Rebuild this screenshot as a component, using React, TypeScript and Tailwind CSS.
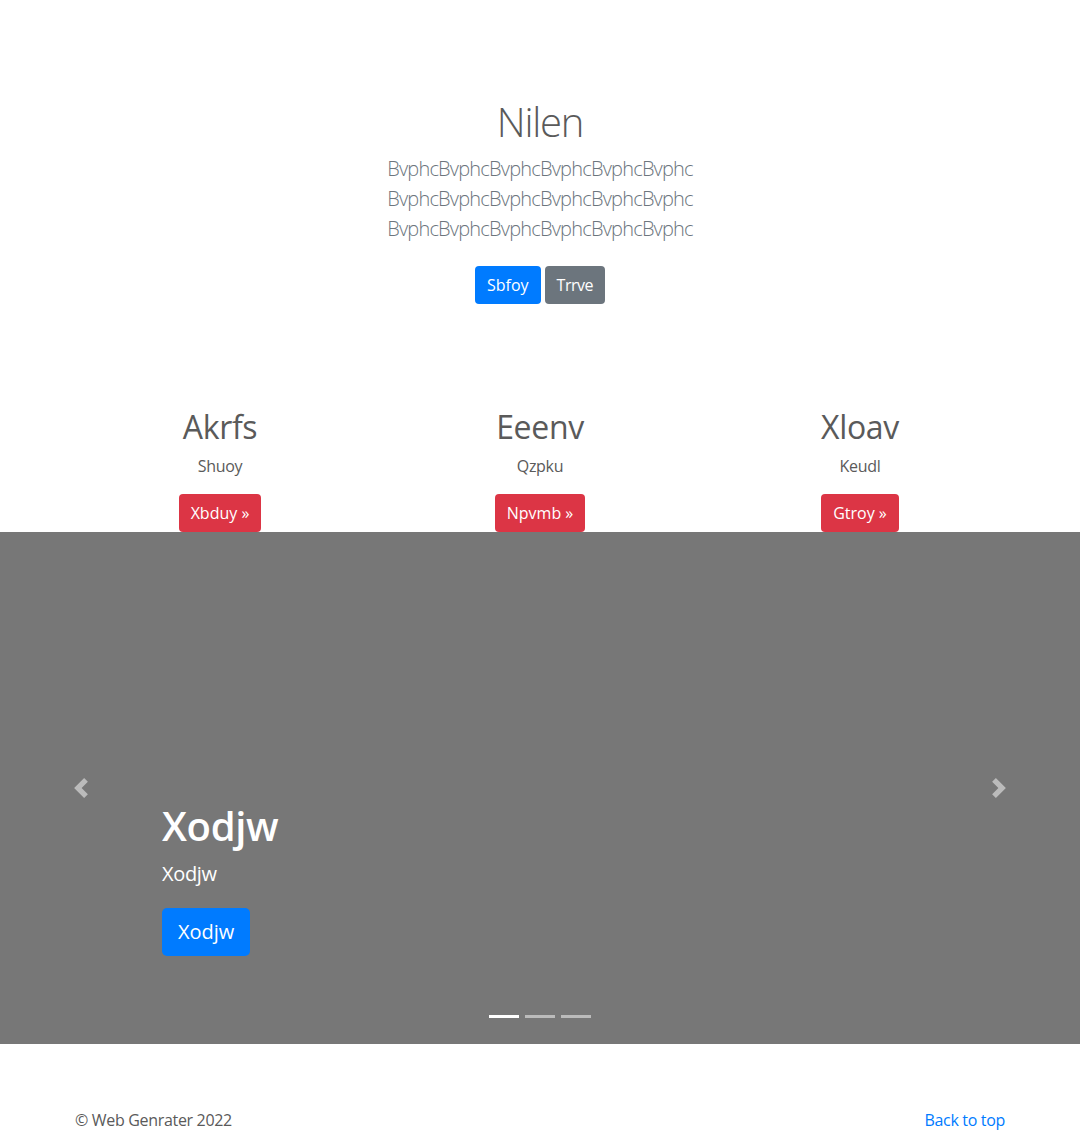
import React from "react";

const font = { fontFamily: '"Open Sans", "Noto Sans", sans-serif' };

function Chevron({ dir }: { dir: "left" | "right" }) {
  return (
    <svg width="20" height="20" viewBox="0 0 8 8" fill="#fff">
      {dir === "left" ? (
        <path d="M5.25 0l-4 4 4 4 1.5-1.5L4.25 4l2.5-2.5L5.25 0z" />
      ) : (
        <path d="M2.75 0l-1.5 1.5L3.75 4l-2.5 2.5L2.75 8l4-4-4-4z" />
      )}
    </svg>
  );
}

export default function App() {
  const cols = [
    { h: "Akrfs", p: "Shuoy", b: "Xbduy" },
    { h: "Eeenv", p: "Qzpku", b: "Npvmb" },
    { h: "Xloav", p: "Keudl", b: "Gtroy" },
  ];
  return (
    <div className="bg-white text-[#5a5a5a] min-h-[1132px] tracking-[-0.02em]" style={font}>
      <section className="text-center pt-[98px]">
        <h1 className="text-[40px] font-light leading-[1.2] mb-2 tracking-[-0.03em]">Nilen</h1>
        <p className="text-[20px] font-light leading-[30px] text-[#6c757d] tracking-[-0.04em]">
          <span className="block">BvphcBvphcBvphcBvphcBvphcBvphc</span>
          <span className="block">BvphcBvphcBvphcBvphcBvphcBvphc</span>
          <span className="block">BvphcBvphcBvphcBvphcBvphcBvphc</span>
        </p>
        <div className="mt-[22px] flex justify-center gap-1">
          <a className="bg-[#007bff] text-white px-3 py-[7px] text-base leading-6 rounded tracking-normal">Sbfoy</a>
          <a className="bg-[#6c757d] text-white px-3 py-[7px] text-base leading-6 rounded tracking-[-0.03em]">Trrve</a>
        </div>
      </section>

      <div className="w-[960px] mx-auto grid grid-cols-3 mt-[104px]">
        {cols.map((c) => (
          <div key={c.h} className="px-[15px] text-center flex flex-col items-center">
            <h2 className="text-[32px] leading-[1.2] font-medium mb-2">{c.h}</h2>
            <p className="mx-3 text-base leading-6 mb-4">{c.p}</p>
            <a className="block bg-[#dc3545] text-white px-3 py-[7px] text-base leading-6 rounded tracking-normal">
              {c.b} »
            </a>
          </div>
        ))}
      </div>

      <div className="relative h-[512px] bg-[#777]">
        <div className="absolute left-[15%] right-[15%] bottom-[48px] pt-5 pb-5 text-white text-left">
          <h1 className="text-[40px] font-semibold leading-[1.2] mb-[10px]">Xodjw</h1>
          <p className="text-[20px] leading-[1.4] mb-5">Xodjw</p>
          <div className="flex">
            <a className="block bg-[#007bff] text-white px-4 py-[9px] text-[20px] leading-[30px] rounded-[5px] tracking-normal">
              Xodjw
            </a>
          </div>
          <div className="h-5" />
        </div>
        <div className="absolute left-0 top-0 bottom-0 w-[15%] flex items-center justify-center opacity-50">
          <Chevron dir="left" />
        </div>
        <div className="absolute right-0 top-0 bottom-0 w-[15%] flex items-center justify-center opacity-50">
          <Chevron dir="right" />
        </div>
        <div className="absolute left-0 right-0 bottom-[26px] flex justify-center">
          <span className="w-[30px] h-[3px] mx-[3px] bg-white" />
          <span className="w-[30px] h-[3px] mx-[3px] bg-white opacity-50" />
          <span className="w-[30px] h-[3px] mx-[3px] bg-white opacity-50" />
        </div>
      </div>

      <footer className="w-[960px] mx-auto px-[15px] mt-16 flex justify-between text-base leading-6">
        <p>© Web Genrater 2022</p>
        <a className="text-[#007bff]">Back to top</a>
      </footer>
    </div>
  );
}
